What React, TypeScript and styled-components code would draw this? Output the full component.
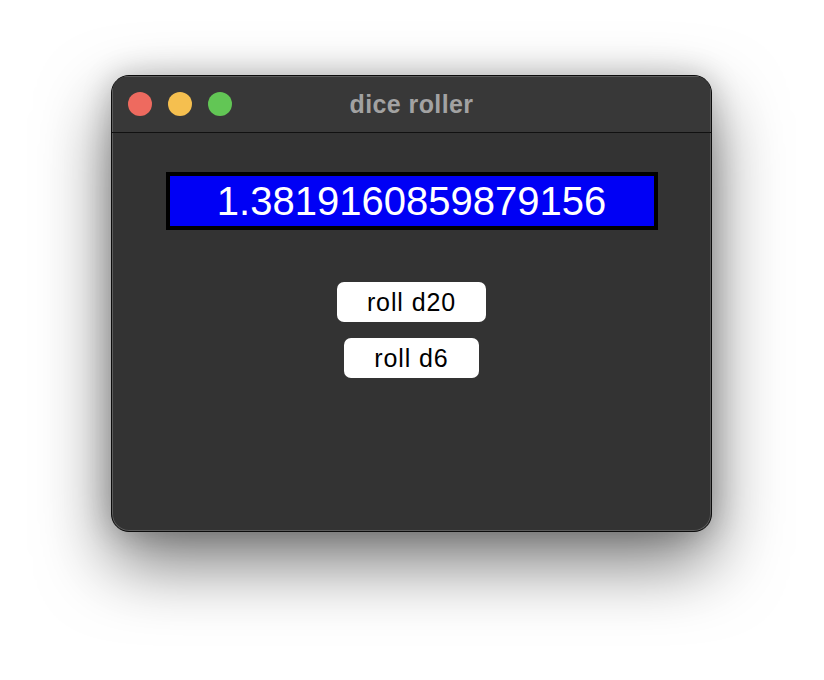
import * as React from 'react';
import styled, { createGlobalStyle } from 'styled-components';

const GlobalStyle = createGlobalStyle`
  html, body {
    margin: 0;
    padding: 0;
    background: #ffffff;
  }
  body {
    font-family: "Liberation Sans", Arial, sans-serif;
  }
`;

const Page = styled.div`
  width: 824px;
  height: 680px;
  padding: 75px 0 0 111px;
  box-sizing: border-box;
`;

const Window = styled.div`
  width: 601px;
  height: 457px;
  box-sizing: border-box;
  border: 1px solid #0c0c0c;
  border-radius: 18px;
  background: #333333;
  box-shadow:
    inset 0 0 0 1px #5c5c5c,
    0 30px 70px rgba(0, 0, 0, 0.55),
    0 0 30px rgba(0, 0, 0, 0.2);
  overflow: hidden;
  display: flex;
  flex-direction: column;
`;

const TitleBar = styled.div`
  position: relative;
  height: 56px;
  flex: none;
  display: flex;
  align-items: center;
  padding-left: 16px;
  gap: 16px;
  background: #383838;
  border-bottom: 1px solid #111111;
  box-shadow: inset 0 1px 0 #5c5c5c, inset 1px 0 0 #5c5c5c, inset -1px 0 0 #5c5c5c;
`;

const Light = styled.span<{ $color: string }>`
  width: 24px;
  height: 24px;
  border-radius: 50%;
  background: ${(p) => p.$color};
`;

const Title = styled.div`
  position: absolute;
  left: 0;
  right: 0;
  top: 0;
  bottom: 0;
  display: flex;
  align-items: center;
  justify-content: center;
  font-family: "Liberation Sans", Arial, sans-serif;
  font-weight: bold;
  font-size: 25px;
  letter-spacing: 0.4px;
  color: #a2a2a2;
  pointer-events: none;
`;

const Content = styled.div`
  flex: 1;
  display: flex;
  flex-direction: column;
  align-items: center;
  padding-top: 39px;
`;

const Display = styled.div`
  width: 492px;
  height: 58px;
  box-sizing: border-box;
  border: 4px solid #000000;
  background: #0000f5;
  color: #ffffff;
  font-family: "Liberation Sans", Arial, sans-serif;
  font-size: 40px;
  display: flex;
  align-items: center;
  justify-content: center;
`;

const Buttons = styled.div`
  margin-top: 52px;
  display: flex;
  flex-direction: column;
  align-items: center;
  gap: 16px;
`;

const RollButton = styled.button`
  height: 40px;
  padding: 0 30px;
  border: none;
  border-radius: 7px;
  background: #ffffff;
  color: #000000;
  font-family: "Liberation Sans", Arial, sans-serif;
  font-size: 25px;
  letter-spacing: 0.9px;
  cursor: pointer;
`;

export default function App() {
  const [value, setValue] = React.useState('1.3819160859879156');

  return (
    <>
      <GlobalStyle />
      <Page>
        <Window>
          <TitleBar>
            <Light $color="#ee6a5f" />
            <Light $color="#f5bf4f" />
            <Light $color="#62c655" />
            <Title>dice roller</Title>
          </TitleBar>
          <Content>
            <Display>{value}</Display>
            <Buttons>
              <RollButton onClick={() => setValue(String(Math.random() * 20))}>roll d20</RollButton>
              <RollButton onClick={() => setValue(String(Math.random() * 6))}>roll d6</RollButton>
            </Buttons>
          </Content>
        </Window>
      </Page>
    </>
  );
}
